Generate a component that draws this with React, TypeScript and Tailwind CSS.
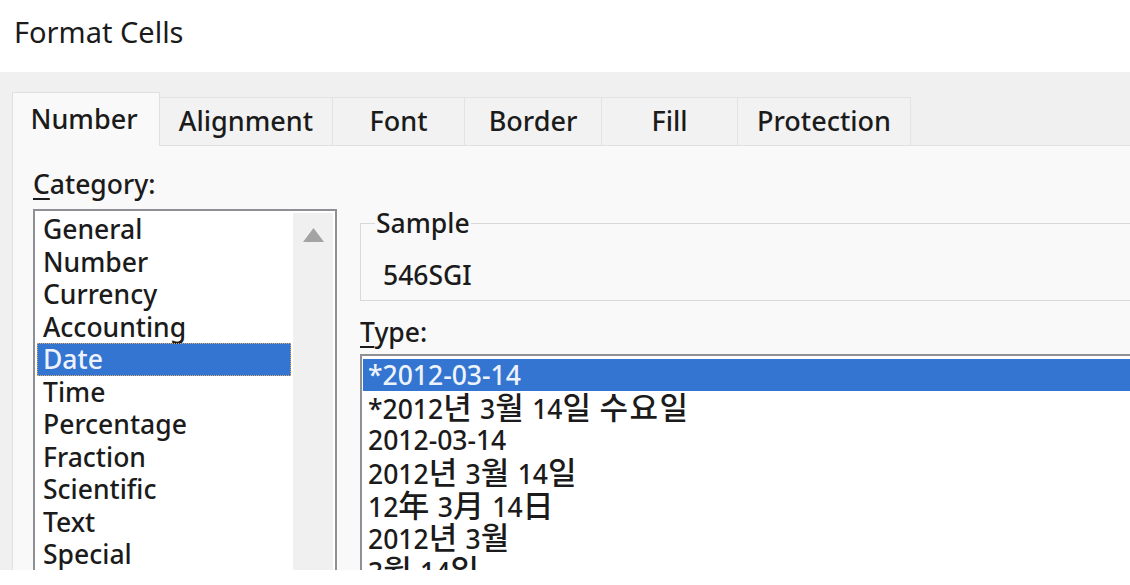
import React from 'react';

const tabs = [
  { label: 'Alignment', w: 'w-[173px]' },
  { label: 'Font', w: 'w-[132px]' },
  { label: 'Border', w: 'w-[137px]' },
  { label: 'Fill', w: 'w-[136px]' },
  { label: 'Protection', w: 'w-[173px]' },
];

const categories = [
  'General', 'Number', 'Currency', 'Accounting', 'Date', 'Time',
  'Percentage', 'Fraction', 'Scientific', 'Text', 'Special', 'Custom',
];

const types = [
  '*2012-03-14',
  '*2012년 3월 14일 수요일',
  '2012-03-14',
  '2012년 3월 14일',
  '12年 3月 14日',
  '2012년 3월',
  '3월 14일',
  '12-03-14',
];

// CJK glyphs render bigger in the Windows font, so bump them up a bit
const withCjk = (s: string) =>
  s.split(/([\u3131-\uD79D\u4E00-\u9FFF]+)/).map((part, i) =>
    /[\u3131-\uD79D\u4E00-\u9FFF]/.test(part) ? (
      <span key={i} className="text-[31px] tracking-[1.5px]">{part}</span>
    ) : (
      part
    )
  );

const App: React.FC = () => {
  return (
    <div className="w-[1130px] h-[585px] bg-white overflow-hidden font-['Noto_Sans','Noto_Sans_CJK_KR',sans-serif] font-medium text-[#1b1b1b]">
      {/* Title bar */}
      <div className="h-[72px] pl-[14px] pt-[12px] text-[29px] leading-[40px] font-normal">Format Cells</div>

      {/* Dialog body */}
      <div className="h-[498px] bg-[#f0f0f0] pl-[12px] pt-[20px] overflow-hidden">
        <div className="flex items-end h-[53px]">
          <div className="relative z-10 -mb-px w-[148px] h-[54px] bg-[#f9f9f9] border border-b-0 border-[#e0e0e0] flex items-center justify-center text-[27px] pr-[4px]">
            Number
          </div>
          {tabs.map((t) => (
            <div
              key={t.label}
              className={`${t.w} h-[48px] bg-[#f2f2f2] border-t border-r border-[#e3e3e3] flex items-center justify-center text-[27px]`}
            >
              {t.label}
            </div>
          ))}
        </div>

        <div className="w-[1200px] h-[500px] bg-[#f9f9f9] border-t border-l border-[#e0e0e0] pl-[20px] pt-[22px] flex text-[26.5px] leading-[32.5px]">
          {/* Category column */}
          <div className="w-[304px] flex flex-col">
            <div className="h-[41px]">
              <span className="underline decoration-2 underline-offset-[4px]">C</span>ategory:
            </div>
            <div className="flex-1 border-2 border-[#8e9096] bg-white p-[2px] flex gap-[2px]">
              <div className="flex-1">
                {categories.map((c) => (
                  <div
                    key={c}
                    className={
                      c === 'Date'
                        ? 'pl-[6px] h-[32.5px] bg-[#3375d0] text-[#eef3fb] outline-1 outline-dotted outline-[#e0a868] -outline-offset-1'
                        : 'pl-[6px] h-[32.5px]'
                    }
                  >
                    {c}
                  </div>
                ))}
              </div>
              <div className="w-[40px] bg-[#f0f0f0] pt-[15px] flex justify-center">
                <svg width="21" height="14" viewBox="0 0 21 14">
                  <polygon points="10.5,0 21,14 0,14" fill="#a3a3a3" />
                </svg>
              </div>
            </div>
          </div>

          {/* Right column */}
          <div className="ml-[23px] w-[800px] flex flex-col">
            <fieldset className="mt-[39px] border border-[#d9d9d9] pl-[14px] pb-[8px]">
              <legend className="px-[1px] leading-[32px]">Sample</legend>
              <div className="mt-[20px] pl-[8px]">546SGI</div>
            </fieldset>
            <div className="mt-[15px] h-[38px]">
              <span className="underline decoration-2 underline-offset-[4px]">T</span>ype:
            </div>
            <div className="flex-1 border-2 border-[#8e9096] bg-white pl-[1px] pt-[3px]">
              {types.map((t, i) => (
                <div
                  key={t}
                  className={
                    i === 0
                      ? 'pl-[5px] h-[32.5px] whitespace-nowrap bg-[#3375d0] text-[#eef3fb]'
                      : 'pl-[5px] h-[32.5px] whitespace-nowrap'
                  }
                >
                  {withCjk(t)}
                </div>
              ))}
            </div>
          </div>
        </div>
      </div>
    </div>
  );
};

export default App;
